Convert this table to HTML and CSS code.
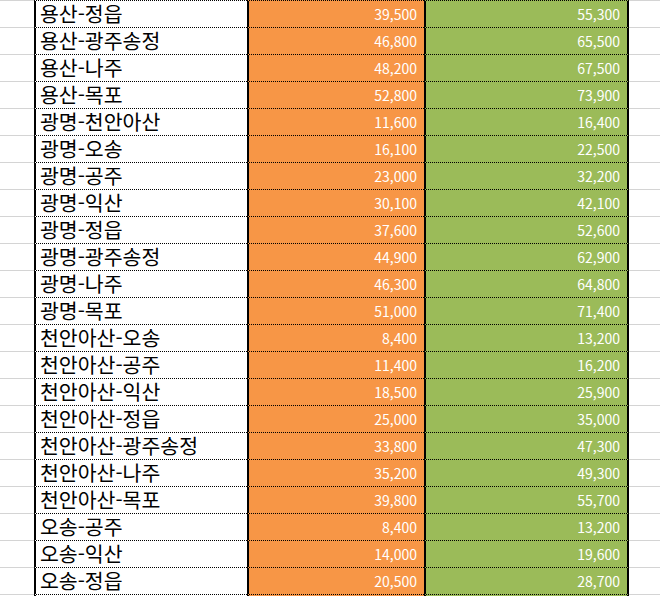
FILE: index.html
```html
<!DOCTYPE html>
<html lang="ko">
<head>
  <meta charset="UTF-8" />
  <title>구간별 운임</title>
  <link rel="stylesheet" href="styles.css">
</head>
<body>

  <!-- fare sheet: route / 일반 / 특실 -->
  <div class="sheet">
    <div class="row"><div class="gutter"></div><div class="name">용산-정읍</div><div class="fare std">39,500</div><div class="fare first">55,300</div><div class="gutter"></div></div>
    <div class="row"><div class="gutter"></div><div class="name">용산-광주송정</div><div class="fare std">46,800</div><div class="fare first">65,500</div><div class="gutter"></div></div>
    <div class="row"><div class="gutter"></div><div class="name">용산-나주</div><div class="fare std">48,200</div><div class="fare first">67,500</div><div class="gutter"></div></div>
    <div class="row"><div class="gutter"></div><div class="name">용산-목포</div><div class="fare std">52,800</div><div class="fare first">73,900</div><div class="gutter"></div></div>
    <div class="row"><div class="gutter"></div><div class="name">광명-천안아산</div><div class="fare std">11,600</div><div class="fare first">16,400</div><div class="gutter"></div></div>
    <div class="row"><div class="gutter"></div><div class="name">광명-오송</div><div class="fare std">16,100</div><div class="fare first">22,500</div><div class="gutter"></div></div>
    <div class="row"><div class="gutter"></div><div class="name">광명-공주</div><div class="fare std">23,000</div><div class="fare first">32,200</div><div class="gutter"></div></div>
    <div class="row"><div class="gutter"></div><div class="name">광명-익산</div><div class="fare std">30,100</div><div class="fare first">42,100</div><div class="gutter"></div></div>
    <div class="row"><div class="gutter"></div><div class="name">광명-정읍</div><div class="fare std">37,600</div><div class="fare first">52,600</div><div class="gutter"></div></div>
    <div class="row"><div class="gutter"></div><div class="name">광명-광주송정</div><div class="fare std">44,900</div><div class="fare first">62,900</div><div class="gutter"></div></div>
    <div class="row"><div class="gutter"></div><div class="name">광명-나주</div><div class="fare std">46,300</div><div class="fare first">64,800</div><div class="gutter"></div></div>
    <div class="row"><div class="gutter"></div><div class="name">광명-목포</div><div class="fare std">51,000</div><div class="fare first">71,400</div><div class="gutter"></div></div>
    <div class="row"><div class="gutter"></div><div class="name">천안아산-오송</div><div class="fare std">8,400</div><div class="fare first">13,200</div><div class="gutter"></div></div>
    <div class="row"><div class="gutter"></div><div class="name">천안아산-공주</div><div class="fare std">11,400</div><div class="fare first">16,200</div><div class="gutter"></div></div>
    <div class="row"><div class="gutter"></div><div class="name">천안아산-익산</div><div class="fare std">18,500</div><div class="fare first">25,900</div><div class="gutter"></div></div>
    <div class="row"><div class="gutter"></div><div class="name">천안아산-정읍</div><div class="fare std">25,000</div><div class="fare first">35,000</div><div class="gutter"></div></div>
    <div class="row"><div class="gutter"></div><div class="name">천안아산-광주송정</div><div class="fare std">33,800</div><div class="fare first">47,300</div><div class="gutter"></div></div>
    <div class="row"><div class="gutter"></div><div class="name">천안아산-나주</div><div class="fare std">35,200</div><div class="fare first">49,300</div><div class="gutter"></div></div>
    <div class="row"><div class="gutter"></div><div class="name">천안아산-목포</div><div class="fare std">39,800</div><div class="fare first">55,700</div><div class="gutter"></div></div>
    <div class="row"><div class="gutter"></div><div class="name">오송-공주</div><div class="fare std">8,400</div><div class="fare first">13,200</div><div class="gutter"></div></div>
    <div class="row"><div class="gutter"></div><div class="name">오송-익산</div><div class="fare std">14,000</div><div class="fare first">19,600</div><div class="gutter"></div></div>
    <div class="row"><div class="gutter"></div><div class="name">오송-정읍</div><div class="fare std">20,500</div><div class="fare first">28,700</div><div class="gutter"></div></div>
    <div class="row"><div class="gutter"></div><div class="name"></div><div class="fare std"></div><div class="fare first"></div><div class="gutter"></div></div>
  </div>

</body>
</html>
```

FILE: styles.css
```css
body {
  margin: 0;
  background: #fff;
  font-family: "Noto Sans CJK KR", "Noto Sans", sans-serif;
  overflow: hidden;
}
.sheet {
  width: 660px;
}
.row {
  display: flex;
  height: 27px;
}
.gutter {
  width: 34px;
  border-top: 1px solid #d4d4d4;
}
.gutter:last-child {
  flex: 1;
}
.name, .fare {
  border-top: 1px dotted #000;
  border-left: 2px solid #000;
  white-space: nowrap;
}
.name {
  width: 207px;
  padding-left: 4px;
  font-size: 20.5px;
  line-height: 25px;
  color: #000;
}
.fare {
  font-size: 14px;
  color: #fff;
  text-align: right;
  padding-top: 1px;
  line-height: 25px;
}
.std {
  width: 168px;
  padding-right: 7px;
  background: #f79646;
}
.first {
  width: 194px;
  padding-right: 7px;
  background: #9bbb59;
  border-right: 2px solid #000;
}
```
